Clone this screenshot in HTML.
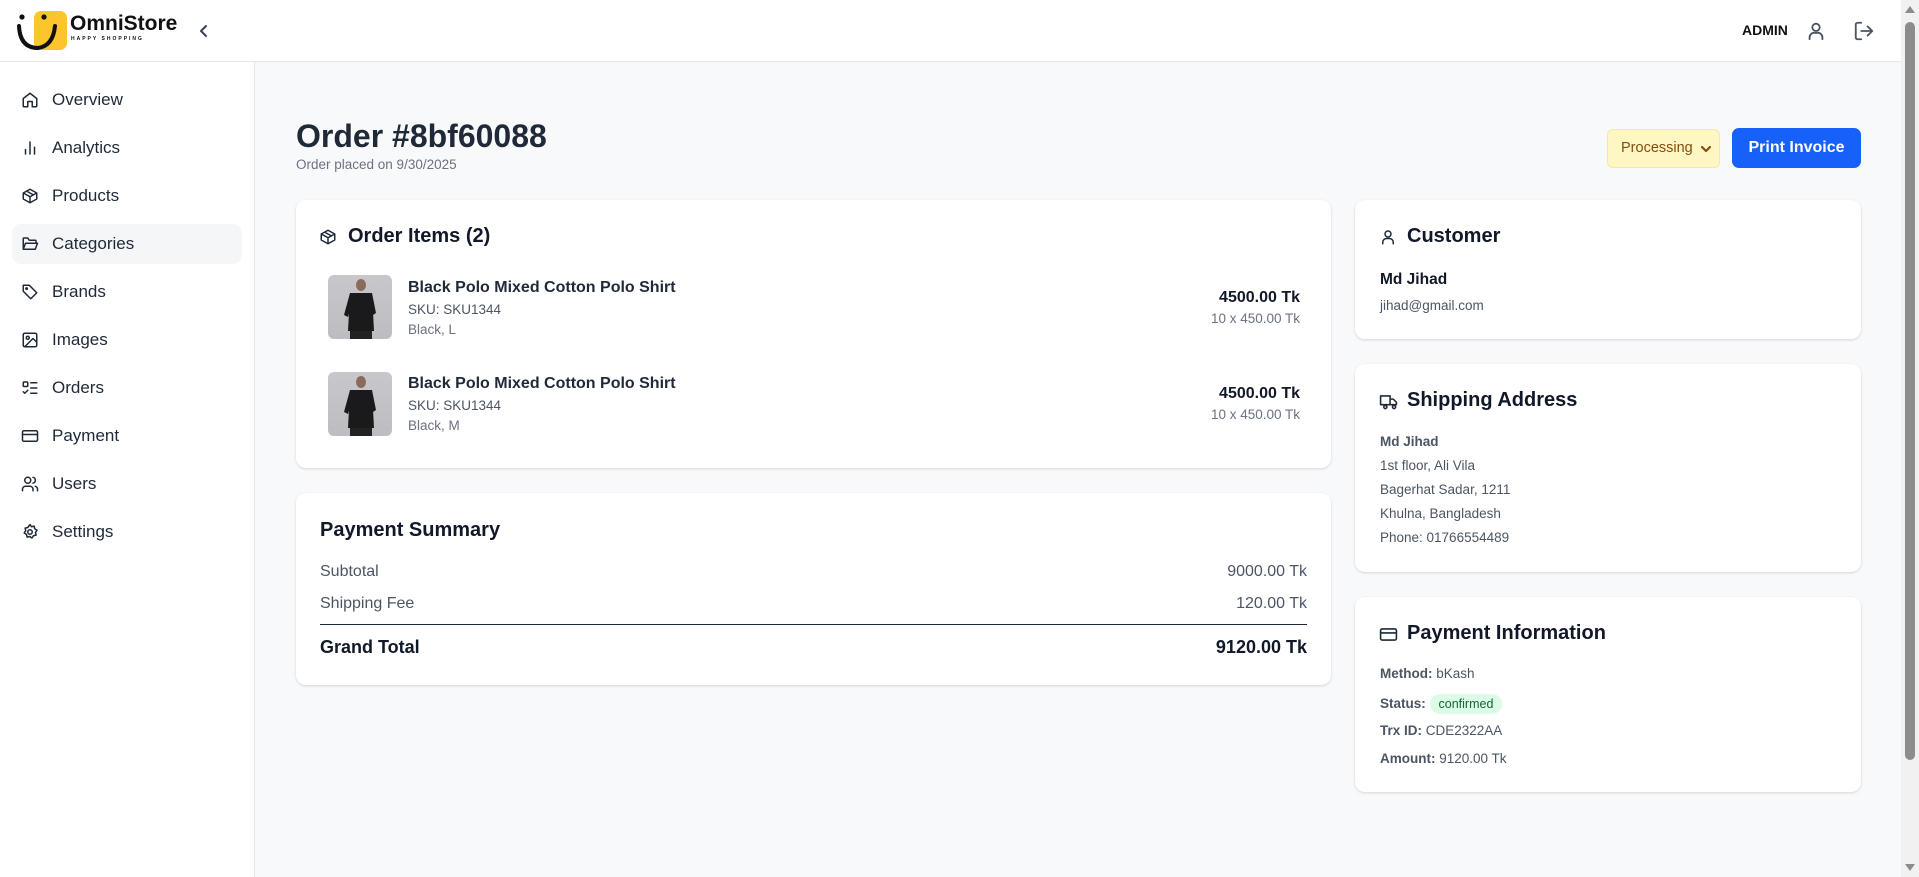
<!DOCTYPE html>
<html><head><meta charset="utf-8"><style>
*{box-sizing:border-box;margin:0;padding:0}
body{width:1919px;height:877px;overflow:hidden;background:#f8f9fb;font-family:"Liberation Sans",sans-serif;color:#111827;position:relative}
.a{position:absolute;white-space:nowrap}
.hdr{position:absolute;left:0;top:0;width:1901px;height:62px;background:#fff;border-bottom:1px solid #e5e7eb}
.side{position:absolute;left:0;top:62px;width:255px;height:815px;background:#fff;border-right:1px solid #e5e7eb}
.nav{position:absolute;left:12px;width:230px;height:40px;border-radius:9px;display:flex;align-items:center;font-size:17px;color:#1f2937}
.nav svg{position:absolute;left:9px;top:11px}
.nav span{position:absolute;left:40px}
.card{position:absolute;background:#fff;border-radius:10px;box-shadow:0 1px 3px rgba(0,0,0,.1),0 1px 2px rgba(0,0,0,.05)}
svg{fill:none;stroke:#1f2937;stroke-width:2;stroke-linecap:round;stroke-linejoin:round}
.h2{font-size:20px;font-weight:bold;color:#111827}
.g{color:#6b7280}
.img{position:absolute;width:64px;height:64px;border-radius:6px;background:linear-gradient(#c8c7cc,#bdbcc1);overflow:hidden}
</style></head><body>
<div class="hdr">
 <div class="a" style="left:34px;top:11px;width:33px;height:39px;background:#fcc52c;border-radius:7px"></div>
 <svg class="a" style="left:16px;top:12px" width="50" height="40" viewBox="0 0 50 40"><circle cx="6" cy="5" r="2.6" fill="#111" stroke="none"/><circle cx="28" cy="5" r="2.6" fill="#111" stroke="none"/><path d="M3 14 Q4 36 22 36 Q37 34 39 14" stroke="#111" stroke-width="4"/></svg>
 <div class="a" style="left:70px;top:12px;font-size:21px;font-weight:bold;color:#111">OmniStore</div>
 <div class="a" style="left:71px;top:36px;font-size:5px;font-weight:bold;letter-spacing:2px;color:#111">HAPPY SHOPPING</div>
 <svg class="a" style="left:196px;top:23px" width="16" height="16" viewBox="0 0 16 16"><path d="M10 3 L5 8 L10 13" stroke="#374151"/></svg>
 <div class="a" style="left:1742px;top:22px;font-size:14px;font-weight:bold;color:#111">ADMIN</div>
 <svg class="a" style="left:1805px;top:20px" width="22" height="22" viewBox="0 0 24 24"><circle cx="12" cy="8" r="4" stroke="#4b5563"/><path d="M5 21v-2a5 5 0 0 1 5-5h4a5 5 0 0 1 5 5v2" stroke="#4b5563"/></svg>
 <svg class="a" style="left:1853px;top:20px" width="22" height="22" viewBox="0 0 24 24"><path d="M9 21H5a2 2 0 0 1-2-2V5a2 2 0 0 1 2-2h4M16 17l5-5-5-5M21 12H9" stroke="#4b5563"/></svg>
</div>
<div class="side">
 <div class="nav" style="top:18px"><svg width="18" height="18" viewBox="0 0 24 24"><path d="M3 10l9-7 9 7v10a1 1 0 0 1-1 1h-5v-7H9v7H4a1 1 0 0 1-1-1z"/></svg><span>Overview</span></div>
 <div class="nav" style="top:66px"><svg width="18" height="18" viewBox="0 0 24 24"><path d="M6 20v-6M12 20V4M18 20v-9"/></svg><span>Analytics</span></div>
 <div class="nav" style="top:114px"><svg width="18" height="18" viewBox="0 0 24 24"><path d="M21 8l-9-5-9 5v8l9 5 9-5z M3 8l9 5 9-5 M12 13v8 M7.5 5.5l9 5"/></svg><span>Products</span></div>
 <div class="nav" style="top:162px;background:#f5f6f8"><svg width="18" height="18" viewBox="0 0 24 24"><path d="M3 19V5a1 1 0 0 1 1-1h5l2 3h8a1 1 0 0 1 1 1v2 M3 19l3-8h16l-3 8z"/></svg><span>Categories</span></div>
 <div class="nav" style="top:210px"><svg width="18" height="18" viewBox="0 0 24 24"><path d="M3 3h8l10 10-8 8L3 11z"/><circle cx="7.5" cy="7.5" r="1"/></svg><span>Brands</span></div>
 <div class="nav" style="top:258px"><svg width="18" height="18" viewBox="0 0 24 24"><rect x="3" y="3" width="18" height="18" rx="2"/><circle cx="9" cy="9" r="2"/><path d="M21 15l-5-5L5 21"/></svg><span>Images</span></div>
 <div class="nav" style="top:306px"><svg width="18" height="18" viewBox="0 0 24 24"><rect x="3" y="4" width="6" height="6" rx="1"/><path d="M3 17l2 2 4-4M13 5h8M13 12h8M13 19h8"/></svg><span>Orders</span></div>
 <div class="nav" style="top:354px"><svg width="18" height="18" viewBox="0 0 24 24"><rect x="2" y="5" width="20" height="14" rx="2"/><path d="M2 10h20"/></svg><span>Payment</span></div>
 <div class="nav" style="top:402px"><svg width="18" height="18" viewBox="0 0 24 24"><circle cx="9" cy="7" r="4"/><path d="M2 21v-2a4 4 0 0 1 4-4h6a4 4 0 0 1 4 4v2M16 3.1a4 4 0 0 1 0 7.8M22 21v-2a4 4 0 0 0-3-3.9"/></svg><span>Users</span></div>
 <div class="nav" style="top:450px"><svg width="18" height="18" viewBox="0 0 24 24"><circle cx="12" cy="12" r="3"/><path d="M12 2l2 3 3.5-.8.8 3.5 3 2-2 3 .8 3.5-3.5.8-2 3-3-2-3.5.8-.8-3.5-3-2 2-3-.8-3.5 3.5-.8z"/></svg><span>Settings</span></div>
</div>
<div class="a" style="left:296px;top:118px;font-size:32px;font-weight:bold;color:#1f2937">Order #8bf60088</div>
<div class="a g" style="left:296px;top:157px;font-size:13.5px">Order placed on 9/30/2025</div>
<div class="a" style="left:1607px;top:129px;width:113px;height:39px;background:#fef6c3;border:1px solid #f3e8a6;border-radius:6px;font-size:14.5px;color:#854d0e;padding:10px 0 0 13px">Processing<svg style="position:absolute;right:8px;top:15px" width="10" height="8" viewBox="0 0 10 8"><path d="M1 2l4 4 4-4" stroke="#854d0e" stroke-width="2.2"/></svg></div>
<div class="a" style="left:1732px;top:128px;width:129px;height:40px;background:#1761fb;border-radius:7px;color:#fff;font-size:16px;font-weight:bold;text-align:center;line-height:40px">Print Invoice</div>

<div class="card" style="left:296px;top:200px;width:1035px;height:268px"></div>
<svg class="a" style="left:319px;top:228px" width="18" height="18" viewBox="0 0 24 24"><path d="M21 8l-9-5-9 5v8l9 5 9-5z M3 8l9 5 9-5 M12 13v8 M7.5 5.5l9 5"/></svg>
<div class="a h2" style="left:348px;top:225px">Order Items (2)</div>
<div class="img" style="left:328px;top:275px"><svg width="64" height="64" viewBox="0 0 64 64" style="stroke:none"><ellipse cx="33" cy="10" rx="5" ry="6" fill="#8a6a58"/><path d="M22 18 L44 18 L46 56 L20 56 Z" fill="#1a1a1c"/><path d="M22 18 L16 40 L20 42 L24 28Z M44 18 L48 38 L45 40 L42 28Z" fill="#1a1a1c"/><rect x="22" y="56" width="22" height="8" fill="#222"/></svg></div>
<div class="a" style="left:408px;top:279px;font-size:16px;font-weight:bold;color:#1f2937">Black Polo Mixed Cotton Polo Shirt</div>
<div class="a g" style="left:408px;top:302px;font-size:13.5px;color:#4b5563">SKU: SKU1344</div>
<div class="a g" style="left:408px;top:322px;font-size:13.5px">Black, L</div>
<div class="a" style="right:619px;top:289px;font-size:16px;font-weight:bold">4500.00 Tk</div>
<div class="a g" style="right:619px;top:311px;font-size:13.5px">10 x 450.00 Tk</div>
<div class="img" style="left:328px;top:372px"><svg width="64" height="64" viewBox="0 0 64 64" style="stroke:none"><ellipse cx="33" cy="10" rx="5" ry="6" fill="#8a6a58"/><path d="M22 18 L44 18 L46 56 L20 56 Z" fill="#1a1a1c"/><path d="M22 18 L16 40 L20 42 L24 28Z M44 18 L48 38 L45 40 L42 28Z" fill="#1a1a1c"/><rect x="22" y="56" width="22" height="8" fill="#222"/></svg></div>
<div class="a" style="left:408px;top:375px;font-size:16px;font-weight:bold;color:#1f2937">Black Polo Mixed Cotton Polo Shirt</div>
<div class="a" style="left:408px;top:398px;font-size:13.5px;color:#4b5563">SKU: SKU1344</div>
<div class="a g" style="left:408px;top:418px;font-size:13.5px">Black, M</div>
<div class="a" style="right:619px;top:385px;font-size:16px;font-weight:bold">4500.00 Tk</div>
<div class="a g" style="right:619px;top:407px;font-size:13.5px">10 x 450.00 Tk</div>

<div class="card" style="left:296px;top:493px;width:1035px;height:192px"></div>
<div class="a h2" style="left:320px;top:519px">Payment Summary</div>
<div class="a" style="left:320px;top:563px;font-size:16px;color:#4b5563">Subtotal</div>
<div class="a" style="right:612px;top:563px;font-size:16px;color:#4b5563">9000.00 Tk</div>
<div class="a" style="left:320px;top:595px;font-size:16px;color:#4b5563">Shipping Fee</div>
<div class="a" style="right:612px;top:595px;font-size:16px;color:#4b5563">120.00 Tk</div>
<div class="a" style="left:320px;top:624px;width:987px;height:1px;background:#1f2937"></div>
<div class="a" style="left:320px;top:637px;font-size:18px;font-weight:bold">Grand Total</div>
<div class="a" style="right:612px;top:637px;font-size:18px;font-weight:bold">9120.00 Tk</div>

<div class="card" style="left:1355px;top:200px;width:506px;height:139px"></div>
<svg class="a" style="left:1379px;top:228px" width="18" height="18" viewBox="0 0 24 24"><circle cx="12" cy="8" r="4"/><path d="M5 21v-2a5 5 0 0 1 5-5h4a5 5 0 0 1 5 5v2"/></svg>
<div class="a h2" style="left:1407px;top:225px">Customer</div>
<div class="a" style="left:1380px;top:271px;font-size:15.5px;font-weight:bold">Md Jihad</div>
<div class="a g" style="left:1380px;top:298px;font-size:13.5px;color:#4b5563">jihad@gmail.com</div>

<div class="card" style="left:1355px;top:364px;width:506px;height:208px"></div>
<svg class="a" style="left:1379px;top:393px" width="19" height="17" viewBox="0 0 24 20"><path d="M2 3h12v11H2z M14 7h4l4 4v3h-8 M6 17a2 2 0 1 0 0-.1 M17 17a2 2 0 1 0 0-.1"/></svg>
<div class="a h2" style="left:1407px;top:389px">Shipping Address</div>
<div class="a" style="left:1380px;top:434px;font-size:13.5px;font-weight:bold;color:#4b5563">Md Jihad</div>
<div class="a" style="left:1380px;top:458px;font-size:13.5px;color:#4b5563">1st floor, Ali Vila</div>
<div class="a" style="left:1380px;top:482px;font-size:13.5px;color:#4b5563">Bagerhat Sadar, 1211</div>
<div class="a" style="left:1380px;top:506px;font-size:13.5px;color:#4b5563">Khulna, Bangladesh</div>
<div class="a" style="left:1380px;top:530px;font-size:13.5px;color:#4b5563">Phone: 01766554489</div>

<div class="card" style="left:1355px;top:597px;width:506px;height:195px"></div>
<svg class="a" style="left:1379px;top:626px" width="19" height="17" viewBox="0 0 24 20"><rect x="2" y="3" width="20" height="14" rx="2"/><path d="M2 8h20"/></svg>
<div class="a h2" style="left:1407px;top:622px">Payment Information</div>
<div class="a" style="left:1380px;top:666px;font-size:13.5px;color:#4b5563"><b>Method:</b> bKash</div>
<div class="a" style="left:1380px;top:694px;font-size:13.5px;color:#4b5563"><b>Status:</b> <span style="display:inline-block;background:#dcfce7;color:#166534;border-radius:12px;padding:3px 9px;font-size:12.5px">confirmed</span></div>
<div class="a" style="left:1380px;top:723px;font-size:13.5px;color:#4b5563"><b>Trx ID:</b> CDE2322AA</div>
<div class="a" style="left:1380px;top:751px;font-size:13.5px;color:#4b5563"><b>Amount:</b> 9120.00 Tk</div>

<div class="a" style="left:1901px;top:0;width:18px;height:877px;background:#f1f1f1"></div>
<div class="a" style="left:1905px;top:22px;width:10px;height:738px;background:#8c8c8c;border-radius:5px"></div>
<div class="a" style="left:1905px;top:6px;width:0;height:0;border-left:5px solid transparent;border-right:5px solid transparent;border-bottom:7px solid #8c8c8c"></div>
<div class="a" style="left:1905px;top:864px;width:0;height:0;border-left:5px solid transparent;border-right:5px solid transparent;border-top:7px solid #8c8c8c"></div>
</body></html>
